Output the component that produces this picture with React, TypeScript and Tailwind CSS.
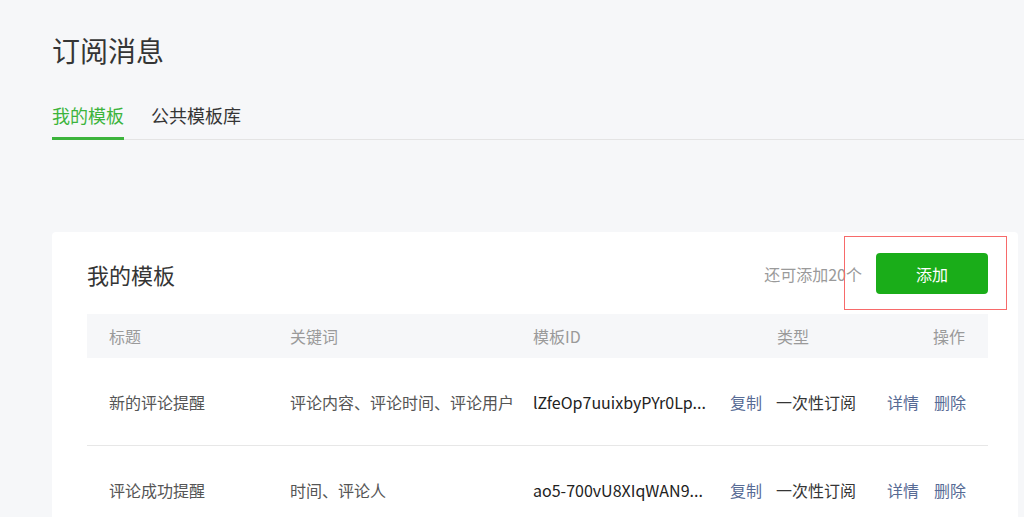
import React from 'react';

type Template = {
  title: string;
  keywords: string;
  id: string;
  type: string;
};

// IDs are shown already shortened, as in the console
const templates: Template[] = [
  { title: '新的评论提醒', keywords: '评论内容、评论时间、评论用户', id: 'lZfeOp7uuixbyPYr0Lp...', type: '一次性订阅' },
  { title: '评论成功提醒', keywords: '时间、评论人', id: 'ao5-700vU8XIqWAN9...', type: '一次性订阅' },
];

function App() {
  return (
    <div className="min-h-screen bg-[#f6f7f9] pl-[52px] font-['Noto_Sans_CJK_SC',sans-serif] text-[#353535]">
      <h1 className="pt-[30px] text-[28px] leading-[40px] font-normal text-[#353535]">订阅消息</h1>

      <div className="mt-[33px] flex border-b border-[#e4e4e4] text-[18px] leading-[24px]">
        <div className="-mb-px border-b-[3px] border-[#3cb43c] pb-[10px] text-[#3cb43c]">我的模板</div>
        <div className="ml-[27px] pb-[10px] text-[#353535]">公共模板库</div>
      </div>

      <div className="relative mt-[92px] w-[966px] rounded-[4px] bg-white pl-[35px] pr-[30px] pt-[21px]">
        <div className="flex items-center">
          <h2 className="flex-1 text-[22px] leading-[30px] font-normal">我的模板</h2>
          <span className="mr-[14px] text-[16px] text-[#9a9a9a]">还可添加20个</span>
          <button className="h-[41px] w-[112px] rounded-[4px] bg-[#1aad19] text-[16px] text-white">添加</button>
        </div>

        <div className="absolute left-[792px] top-[4px] h-[74px] w-[163px] border border-[#f76a6a]" />

        <div className="mt-[20px]">
          <div className="flex h-[44px] items-center bg-[#f6f7f9] px-[22px] text-[16px] text-[#9a9a9a]">
            <div className="w-[181px]">标题</div>
            <div className="w-[243px]">关键词</div>
            <div className="w-[244px]">模板ID</div>
            <div className="flex-1">类型</div>
            <div className="pr-px">操作</div>
          </div>

          {templates.map((t, i) => (
            <div
              key={t.id}
              className={`flex h-[88px] items-center px-[22px] text-[16px] ${i === 0 ? 'border-b border-[#e7e7e7]' : ''}`}
            >
              <div className="w-[181px] text-[#555]">{t.title}</div>
              <div className="w-[243px] text-[#555]">{t.keywords}</div>
              <div className="flex w-[243px] items-center">
                <span className="w-[197px] whitespace-nowrap text-[#222]">{t.id}</span>
                <a className="text-[#576b95]">复制</a>
              </div>
              <div className="flex-1 text-[#353535]">{t.type}</div>
              <div className="flex gap-[15px] text-[#576b95]">
                <a>详情</a>
                <a>删除</a>
              </div>
            </div>
          ))}
        </div>
      </div>
    </div>
  );
}

export default App;
